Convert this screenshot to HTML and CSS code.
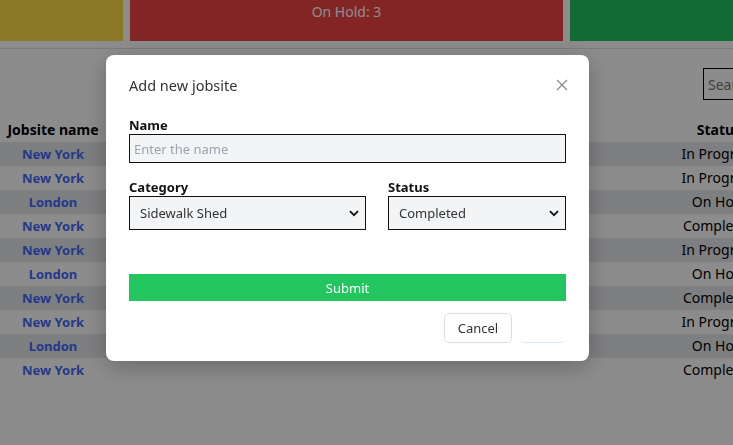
FILE: index.html
```html
<!DOCTYPE html>
<html lang="en">
<head>
<meta charset="utf-8">
<title>Jobsites</title>
<link rel="stylesheet" href="styles.css">
</head>
<body>
<div class="page">
  <div class="cards">
    <div class="card card-yellow">In Progress: 4</div>
    <div class="card card-red">On Hold: 3</div>
    <div class="card card-green">Completed: 3</div>
  </div>
  <div class="divider"></div>
  <div class="toolbar">
    <input class="search" type="text" placeholder="Search">
  </div>
  <table class="jobs">
    <thead>
      <tr><th class="c-name">Jobsite name</th><th class="c-mid"></th><th class="c-status">Status</th></tr>
    </thead>
    <tbody>
      <tr><td class="c-name link">New York</td><td></td><td class="c-status">In Progress</td></tr>
      <tr><td class="c-name link">New York</td><td></td><td class="c-status">In Progress</td></tr>
      <tr><td class="c-name link">London</td><td></td><td class="c-status">On Hold</td></tr>
      <tr><td class="c-name link">New York</td><td></td><td class="c-status">Completed</td></tr>
      <tr><td class="c-name link">New York</td><td></td><td class="c-status">In Progress</td></tr>
      <tr><td class="c-name link">London</td><td></td><td class="c-status">On Hold</td></tr>
      <tr><td class="c-name link">New York</td><td></td><td class="c-status">Completed</td></tr>
      <tr><td class="c-name link">New York</td><td></td><td class="c-status">In Progress</td></tr>
      <tr><td class="c-name link">London</td><td></td><td class="c-status">On Hold</td></tr>
      <tr><td class="c-name link">New York</td><td></td><td class="c-status">Completed</td></tr>
    </tbody>
  </table>
</div>

<div class="overlay">
  <div class="modal">
    <div class="modal-head">
      <h2 class="modal-title">Add new jobsite</h2>
      <button class="close" type="button" aria-label="Close">
        <svg width="12" height="12" viewBox="0 0 12 12"><path d="M1 1 L11 11 M11 1 L1 11" stroke="#8a8a8a" stroke-width="1.2" fill="none"/></svg>
      </button>
    </div>
    <form class="form">
      <label class="field">
        <span class="label">Name</span>
        <input class="input" type="text" placeholder="Enter the name">
      </label>
      <div class="row">
        <label class="field grow">
          <span class="label">Category</span>
          <span class="select-wrap">
            <select class="select"><option>Sidewalk Shed</option></select>
            <svg class="chev" width="10" height="7" viewBox="0 0 10 7"><path d="M1 1.2 L5 5.2 L9 1.2" stroke="#111" stroke-width="1.8" fill="none"/></svg>
          </span>
        </label>
        <label class="field status-field">
          <span class="label">Status</span>
          <span class="select-wrap">
            <select class="select"><option>Completed</option></select>
            <svg class="chev" width="10" height="7" viewBox="0 0 10 7"><path d="M1 1.2 L5 5.2 L9 1.2" stroke="#111" stroke-width="1.8" fill="none"/></svg>
          </span>
        </label>
      </div>
      <button class="submit" type="button">Submit</button>
    </form>
    <div class="modal-foot">
      <button class="btn-cancel" type="button">Cancel</button>
      <button class="btn-ok" type="button"></button>
    </div>
  </div>
</div>
</body>
</html>
```
FILE: styles.css
```css
* { box-sizing: border-box; }
html, body {
  margin: 0;
  width: 733px;
  height: 445px;
  overflow: hidden;
  background: #fff;
  font-family: "Noto Sans", "Open Sans", sans-serif;
  color: #000;
}
.page {
  width: 764px;
}
.cards {
  display: flex;
  gap: 7px;
  height: 41px;
  width: 733px;
}
.card {
  color: #fff;
  font-size: 14px;
  text-align: center;
  padding-top: 2px;
  line-height: 20px;
}
.card-yellow { width: 123px; background: rgb(251, 222, 73); color: transparent; }
.card-red { width: 433px; background: #ef4444; }
.card-green { flex: 1; background: #22c55e; color: transparent; }
.divider {
  margin-top: 7px;
  height: 1px;
  background: #e3e3e3;
  width: 733px;
}
.toolbar {
  display: flex;
  justify-content: flex-end;
  padding-top: 19px;
  padding-right: 0;
}
.search {
  width: 61px;
  height: 32px;
  border: 1px solid #000;
  font-family: inherit;
  font-size: 14px;
  padding: 0 4px;
  outline: none;
}
.search::placeholder { color: #777; }
.jobs {
  margin-top: 18px;
  width: 764px;
  border-collapse: collapse;
  font-size: 14px;
}
.jobs th, .jobs td {
  height: 24px;
  padding: 0;
  line-height: 20px;
  text-align: center;
  white-space: nowrap;
}
.jobs th { font-weight: 700; }
.c-name { width: 106px; }
.c-status { width: 90px; }
.jobs td.link { color: rgb(67, 104, 253); font-weight: 700; font-size: 13px; }
.jobs tbody tr:nth-child(odd) { background: #e6e7eb; }

.overlay {
  position: fixed;
  inset: 0;
  background: rgba(0, 0, 0, 0.45);
  padding: 55px 0 0 106px;
}
.modal {
  width: 483px;
  height: 306px;
  background: #fff;
  border-radius: 8px;
  box-shadow: 0 6px 24px rgba(0, 0, 0, 0.25);
  padding: 19px 23px 0 23px;
  display: flex;
  flex-direction: column;
}
.modal-head {
  display: flex;
  align-items: center;
  justify-content: space-between;
  height: 22px;
}
.modal-title {
  margin: 0;
  font-size: 14.5px;
  font-weight: 400;
  color: #333;
}
.close {
  border: 0;
  background: none;
  padding: 0;
  margin-right: -2px;
  width: 12px;
  height: 12px;
  display: flex;
}
.form {
  margin-top: 20px;
  display: flex;
  flex-direction: column;
}
.field {
  display: flex;
  flex-direction: column;
}
.label {
  font-size: 13px;
  font-weight: 700;
  line-height: 18px;
  color: #111;
}
.input {
  height: 29px;
  border: 1px solid #111;
  background: #f3f4f6;
  font-family: inherit;
  font-size: 13px;
  padding: 0 4px;
  outline: none;
}
.input::placeholder { color: #9ca3af; }
.row {
  display: flex;
  gap: 22px;
  margin-top: 15px;
}
.grow { flex: 0 0 237px; }
.status-field { flex: 1; }
.select-wrap {
  position: relative;
  display: block;
}
.select {
  appearance: none;
  -webkit-appearance: none;
  width: 100%;
  height: 34px;
  border: 1px solid #111;
  border-radius: 0;
  background: #f3f4f6;
  font-family: inherit;
  font-size: 13px;
  color: #333;
  padding: 0 10px;
}
.chev {
  position: absolute;
  right: 7px;
  top: 14px;
}
.submit {
  margin-top: 44px;
  height: 27px;
  border: 0;
  background: #22c55e;
  color: #fff;
  font-family: inherit;
  font-size: 13px;
}
.modal-foot {
  display: flex;
  justify-content: flex-end;
  align-items: flex-end;
  gap: 7px;
  margin-top: 12px;
}
.btn-cancel {
  width: 68px;
  height: 30px;
  border: 1px solid #dcdcdc;
  border-radius: 5px;
  background: #fff;
  font-family: inherit;
  font-size: 13px;
  color: #333;
}
.btn-ok {
  width: 47px;
  height: 26px;
  border: 0;
  border-bottom: 1px solid #dbeafe;
  border-radius: 5px;
  background: #fff;
}
```
